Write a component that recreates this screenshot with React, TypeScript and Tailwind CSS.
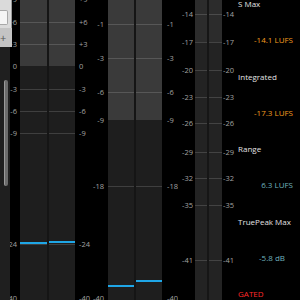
import React from 'react';

type Tick = { y: number; label: string; line?: boolean };

const m1Ticks: Tick[] = [
  { y: -1, label: '+9', line: false },
  { y: 22, label: '+6' },
  { y: 44, label: '+3' },
  { y: 66, label: '0', line: false },
  { y: 89, label: '-3' },
  { y: 111, label: '-6' },
  { y: 133, label: '-9' },
  { y: 244, label: '-24' },
  { y: 298, label: '-40', line: false },
];

const m2Ticks: Tick[] = [
  { y: 24, label: '-1' },
  { y: 58, label: '-3' },
  { y: 92, label: '-6' },
  { y: 120, label: '-9', line: false },
  { y: 186, label: '-18' },
  { y: 298, label: '-40', line: false },
];

const m3Ticks: Tick[] = [
  { y: 14, label: '-14' },
  { y: 42, label: '-17' },
  { y: 70, label: '-20' },
  { y: 97, label: '-23' },
  { y: 123, label: '-26' },
  { y: 152, label: '-29' },
  { y: 178, label: '-32' },
  { y: 205, label: '-35' },
  { y: 260, label: '-41' },
];

function Scale({ ticks, width, side }: { ticks: Tick[]; width: string; side: string }) {
  return (
    <div className={`relative h-full shrink-0 overflow-hidden ${width}`}>
      {ticks.map((t) => (
        <span
          key={t.label}
          className={`absolute whitespace-nowrap text-[7.5px] leading-[10px] text-[#a2a2a2] ${side}`}
          style={{ top: t.y - 5 }}
        >
          {t.label}
        </span>
      ))}
    </div>
  );
}

function Channel({
  width,
  split,
  upper,
  lower,
  ticks,
  level,
}: {
  width: string;
  split: number;
  upper: string;
  lower: string;
  ticks: Tick[];
  level?: number;
}) {
  return (
    <div className={`relative flex h-full flex-col ${width}`}>
      <div className={upper} style={{ height: split }} />
      <div className={`flex-1 ${lower}`} />
      {ticks
        .filter((t) => t.line !== false)
        .map((t) => (
          <div key={t.label} className="absolute left-0 right-0 h-px bg-white/15" style={{ top: t.y }} />
        ))}
      {level !== undefined && (
        <div className="absolute left-0 right-0 h-[2px] bg-[#1fa6e6]" style={{ top: level }} />
      )}
    </div>
  );
}

function Sidebar() {
  return (
    <div className="relative z-10 flex h-full w-[10px] shrink-0 flex-col bg-[#1f1f1f]">
      <div className="w-[12px] shrink-0">
        <div className="h-[28px] border-r border-[#9a9a9a] bg-[#dadada] pt-[10px]">
          <div className="h-[15px] w-[8px] rounded-r-[2px] border border-l-0 border-[#a8a8a8] bg-[#f5f5f5]" />
        </div>
        <div className="flex h-[19px] items-center bg-[#c4c4c4] pl-[0px] text-[11px] leading-none text-[#555]">+</div>
      </div>
      <div className="flex flex-1 flex-col pt-[33px] pl-[4px]">
        <div className="h-[106px] w-[4px] rounded-full border-l border-[#9a9a9a] bg-[#6c6c6c]" />
      </div>
    </div>
  );
}

function InfoPanel() {
  return (
    <div className="flex h-full w-[65px] shrink-0 flex-col gap-[26.3px] pl-[3px] -mt-[1px] text-[8px] leading-[10px]">
      <div className="text-[#e2e2e2]">S Max</div>
      <div className="pr-[7px] text-right text-[#f39c1f]">-14.1 LUFS</div>
      <div className="text-[#e2e2e2]">Integrated</div>
      <div className="pr-[7px] text-right text-[#f39c1f]">-17.3 LUFS</div>
      <div className="text-[#e2e2e2]">Range</div>
      <div className="pr-[7px] text-right text-[#6fb2be]">6.3 LUFS</div>
      <div className="text-[#e2e2e2]">TruePeak Max</div>
      <div className="pr-[15px] text-right text-[#6fb2be]">-5.8 dB</div>
      <div className="text-[#ff2a2a]">GATED</div>
    </div>
  );
}

export default function App() {
  return (
    <div
      className="flex h-[300px] w-[300px] overflow-hidden bg-black"
      style={{ fontFamily: '"Segoe UI", "Open Sans", "Noto Sans", sans-serif' }}
    >
      <Sidebar />

      {/* meter 1: sample peak */}
      <Scale ticks={m1Ticks} width="w-[10px]" side="right-[3px]" />
      <div className="flex h-full w-[55px] shrink-0">
        <Channel width="w-[27px]" split={66} upper="bg-[#3a3a3a]" lower="bg-[#1e1e1e]" ticks={m1Ticks} level={242} />
        <div className="h-full w-[2px] bg-[#151515]" />
        <Channel width="w-[26px]" split={66} upper="bg-[#3a3a3a]" lower="bg-[#1e1e1e]" ticks={m1Ticks} level={241} />
      </div>
      <Scale ticks={m1Ticks} width="w-[16px]" side="left-[4px]" />

      {/* meter 2 */}
      <Scale ticks={m2Ticks} width="w-[17px]" side="right-[4px]" />
      <div className="flex h-full w-[54px] shrink-0">
        <Channel width="w-[26px]" split={120} upper="bg-[#3a3a3a]" lower="bg-[#1e1e1e]" ticks={m2Ticks} level={285} />
        <div className="h-full w-[2px] bg-[#151515]" />
        <Channel width="w-[26px]" split={120} upper="bg-[#3a3a3a]" lower="bg-[#1e1e1e]" ticks={m2Ticks} level={280} />
      </div>
      <Scale ticks={m2Ticks} width="w-[16px]" side="left-[5px]" />

      {/* meter 3: loudness */}
      <Scale ticks={m3Ticks} width="w-[17px]" side="right-[2px]" />
      <div className="flex h-full w-[27px] shrink-0">
        <Channel width="w-[12px]" split={42} upper="bg-[#2c2c2c]" lower="bg-[#232323]" ticks={m3Ticks} />
        <div className="h-full w-[2px] bg-[#161616]" />
        <Channel width="w-[13px]" split={42} upper="bg-[#2c2c2c]" lower="bg-[#232323]" ticks={m3Ticks} />
      </div>
      <Scale ticks={m3Ticks} width="w-[13px]" side="left-[1px]" />

      <InfoPanel />
    </div>
  );
}
